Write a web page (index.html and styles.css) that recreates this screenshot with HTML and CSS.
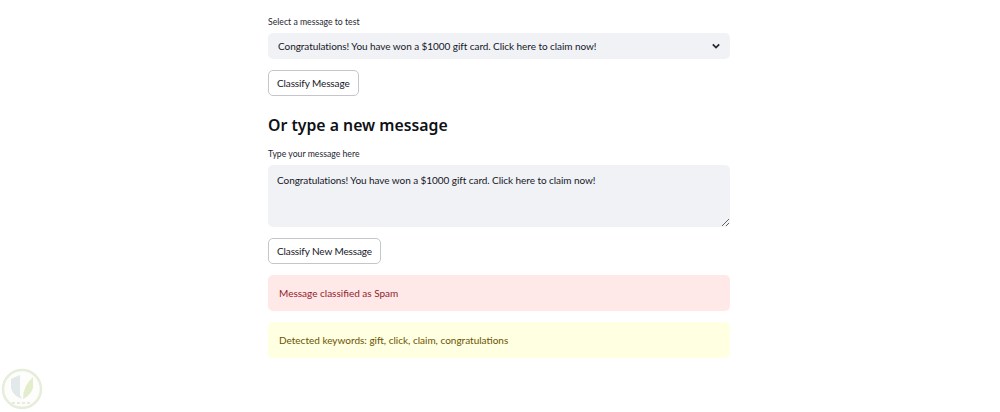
FILE: index.html
```html
<!DOCTYPE html>
<html lang="en">
<head>
  <meta charset="UTF-8">
  <title>Spam Classifier</title>
  <link rel="stylesheet" href="styles.css">
</head>
<body>
  <main class="contenido">
    <div class="campo">
      <label class="etiqueta">Select a message to test</label>
      <div class="selector">
        <span class="largo">Congratulations! You have won a $1000 gift card. Click here to claim now!</span>
        <svg class="flecha" width="8" height="6" viewBox="0 0 10 7"><path d="M1 1.5 L5 5.5 L9 1.5" fill="none" stroke="#262730" stroke-width="2.2"/></svg>
      </div>
    </div>
    <div><button class="boton">Classify Message</button></div>
    <h2 class="titulo">Or type a new message</h2>
    <div class="campo">
      <label class="etiqueta" for="mensaje">Type your message here</label>
      <textarea class="texto largo" id="mensaje">Congratulations! You have won a $1000 gift card. Click here to claim now!</textarea>
    </div>
    <div><button class="boton">Classify New Message</button></div>
    <div class="alerta spam">Message classified as Spam</div>
    <div class="alerta aviso">Detected keywords: gift, click, claim, congratulations</div>
  </main>

  <svg class="marca" width="44" height="44" viewBox="0 0 44 44">
    <circle cx="22" cy="21" r="19" fill="#fdfdfb" stroke="#e6edda" stroke-width="2.5"/>
    <path d="M11 11 Q17 8 20 7 L20 27 Q21 29 22 31 Q13 28 11 20 Z" fill="#e3e8e8"/>
    <path d="M23 31 Q23 18 33 9 L33 20 Q31 27 23 31 Z" fill="#e3edcc"/>
    <path d="M12 35 H32" stroke="#e6ebdc" stroke-width="2" stroke-dasharray="3 2"/>
  </svg>
</body>
</html>
```

FILE: styles.css
```css
body {
  margin: 0;
  padding-right: 2px;
  background: white;
  font-family: 'Lato', sans-serif;
  color: #16171f;
}
.contenido {
  width: 462px;
  margin: 0 auto;
  padding-top: 16px;
  display: flex;
  flex-direction: column;
  gap: 11px;
}
.campo {
  display: flex;
  flex-direction: column;
  gap: 5px;
}
.etiqueta {
  font-size: 8.7px;
  line-height: 12px;
  color: #262730;
}
.selector {
  height: 26px;
  padding: 0 10px 0 10px;
  background: #f0f2f6;
  border-radius: 5px;
  display: flex;
  align-items: center;
  justify-content: space-between;
  font-size: 10px;
}
.largo {
  letter-spacing: -0.06px;
}
.boton {
  height: 26px;
  padding: 0 8px;
  background: white;
  border: 1px solid #c4c6cc;
  border-radius: 5px;
  font-family: inherit;
  font-size: 10px;
  letter-spacing: -0.12px;
  color: #16171f;
}
.titulo {
  margin: 7px 0 0;
  font-family: 'Noto Sans', sans-serif;
  font-size: 15.8px;
  line-height: 23px;
  font-weight: 600;
  color: #0f1116;
}
.texto {
  display: block;
  box-sizing: border-box;
  width: 100%;
  height: 62px;
  padding: 8px 9px;
  background: #f0f2f6;
  border: none;
  border-radius: 5px;
  font-family: inherit;
  font-size: 10px;
  line-height: 14px;
  color: #16171f;
}
.alerta {
  height: 36px;
  padding: 0 11px;
  border-radius: 5px;
  display: flex;
  align-items: center;
  font-size: 10px;
}
.spam {
  background: #ffe8e8;
  color: #93222a;
}
.aviso {
  background: #ffffe2;
  color: #6b5200;
}
.marca {
  position: fixed;
  left: 0;
  bottom: 0;
}
```
